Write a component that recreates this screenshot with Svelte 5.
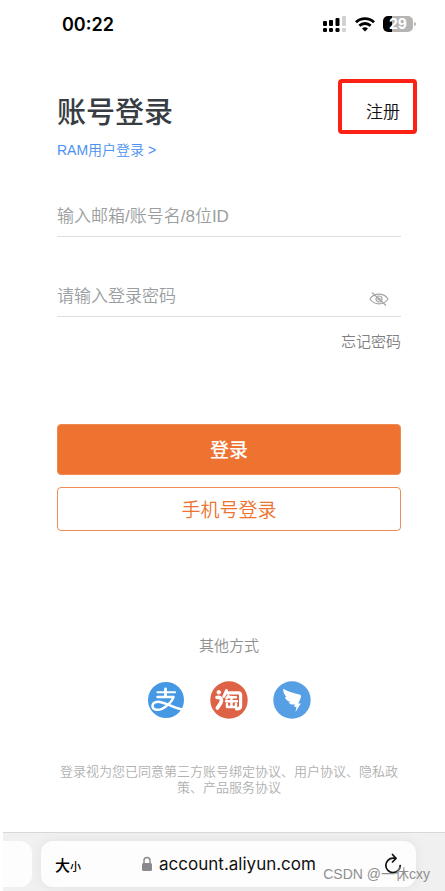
<script>
	let account = $state('');
	let password = $state('');
	let visible = $state(false);
</script>

<div class="screen">
	<header class="status">
		<time>00:22</time>
		<div class="status-icons">
			<svg width="24" height="17" viewBox="0 0 24 17" aria-label="信号">
				<rect x="0" y="5" width="4" height="5" rx="1" />
				<rect x="6" y="4" width="4" height="6" rx="1" />
				<rect x="12.5" y="2" width="4" height="8" rx="1" />
				<rect x="19" y="0" width="4" height="10" rx="1" fill="#d2d2d2" />
				<rect x="0" y="12" width="4" height="4" rx="1.2" />
				<rect x="6" y="12" width="4" height="4" rx="1.2" />
				<rect x="12.5" y="12" width="4" height="4" rx="1.2" />
				<rect x="19" y="12" width="4" height="4" rx="1.2" fill="#d2d2d2" />
			</svg>
			<svg width="20" height="15" viewBox="0 0 20 15" fill="none" stroke="#000" stroke-width="2.8" aria-label="无线网络">
				<path d="M1 5.2a13 13 0 0 1 18 0" />
				<path d="M4.4 8.8a8 8 0 0 1 11.2 0" />
				<path d="M10 14.6l-3-3a4.4 4.4 0 0 1 6 0z" fill="#000" stroke="none" />
			</svg>
			<div class="battery"><span>29</span></div>
		</div>
	</header>

	<main>
		<div class="heading">
			<div>
				<h1>账号登录</h1>
				<a class="ram" href="#ram">RAM用户登录 &gt;</a>
			</div>
			<a class="register" href="#register">注册</a>
		</div>

		<form onsubmit={(e) => e.preventDefault()}>
			<div class="field">
				<input type="text" aria-label="账号" placeholder="输入邮箱/账号名/8位ID" bind:value={account} />
			</div>
			<div class="field">
				<input
					type={visible ? 'text' : 'password'}
					aria-label="密码"
					placeholder="请输入登录密码"
					bind:value={password}
				/>
				<button type="button" class="eye" aria-label="显示密码" onclick={() => (visible = !visible)}>
					<svg width="20" height="16" viewBox="0 0 20 16" fill="none" stroke="#a6a6a6" stroke-width="1.2">
						<path d="M1 8c2-3.2 5.2-4.8 9-4.8S17 4.8 19 8c-2 3.2-5.2 4.8-9 4.8S3 11.2 1 8z" />
						<circle cx="10" cy="8" r="3" />
						<circle cx="10" cy="8" r="1" />
						<path d="M3 1.5l14 13" />
					</svg>
				</button>
			</div>
			<a class="forgot" href="#forgot">忘记密码</a>
			<button type="submit" class="btn primary">登录</button>
			<button type="button" class="btn outline">手机号登录</button>
		</form>

		<section class="others">
			<h2>其他方式</h2>
			<div class="socials">
				<a href="#alipay" aria-label="支付宝">
					<svg width="38" height="38" viewBox="0 0 38 38">
						<circle cx="19" cy="19" r="18" fill="#4599e4" />
						<g fill="none" stroke="#fff" stroke-linecap="round" stroke-linejoin="round">
							<path d="M18.5 8V15.5" stroke-width="2.8" />
							<path d="M10.5 11.2H28" stroke-width="2.1" />
							<path d="M10.5 16H26.5C25 20.5 20 25.5 15 27.8C10 29.8 5.5 28.5 5.5 25C5.5 21.5 9.5 20.2 14 21.2C20 22.5 26 26.5 35 28.5" stroke-width="2.5" />
						</g>
					</svg>
				</a>
				<a href="#taobao" aria-label="淘宝">
					<svg width="38" height="38" viewBox="0 0 38 38">
						<circle cx="19" cy="19" r="18.7" fill="#de6246" />
						<g fill="none" stroke="#fff" stroke-linecap="round" stroke-linejoin="round">
							<circle cx="8.8" cy="11.3" r="1.8" fill="#fff" stroke-width="1" />
							<path d="M7 16.5C9.5 16 11.8 17 11.5 19.5C11.3 22 9 24.5 7.3 27" stroke-width="3.6" />
							<path d="M16.5 9.5L13.8 15.5" stroke-width="3" />
							<path d="M16 11.8H28.5Q30.6 11.8 30.6 14V25Q30.6 28 26.5 28" stroke-width="3.2" />
							<path d="M18.5 14.5L16.5 17.5M18 16.2H26M16 20.3H27M21.5 16V26M17 23V26H26V23" stroke-width="2.4" />
						</g>
					</svg>
				</a>
				<a href="#dingtalk" aria-label="钉钉">
					<svg width="38" height="38" viewBox="0 0 38 38">
						<circle cx="19" cy="19" r="18.7" fill="#579fe5" />
						<path
							d="M10.2 7.8C15 10.5 21 12.5 26.5 13.6C28 14 28.3 15 27.9 16.2C27.3 18.5 26.2 20.6 25.2 22.5H27.8L22.5 31L23.5 25.8H21L22 23.4C19.5 24 17.5 23.3 15.5 21.4L17.5 21C14.5 20.2 12.6 18.5 11.9 15.9L13.5 16C11 13.5 10 11 10.2 7.8Z"
							fill="#fff"
						/>
					</svg>
				</a>
			</div>
			<p>登录视为您已同意第三方账号绑定协议、用户协议、隐私政策、产品服务协议</p>
		</section>
	</main>

	<footer class="toolbar">
		<div class="prev-tab"></div>
		<div class="address">
			<button type="button" class="text-size" aria-label="大小">大<small>小</small></button>
			<div class="url">
				<svg width="12" height="16" viewBox="0 0 12 16" aria-hidden="true">
					<path d="M3 8V4.5a3 3 0 0 1 6 0V8" fill="none" stroke="#8a8a8e" stroke-width="1.5" />
					<rect x="1" y="7" width="10" height="8" rx="1.5" fill="#8a8a8e" />
				</svg>
				<span>account.aliyun.com</span>
			</div>
			<button type="button" class="reload" aria-label="重新加载">
				<svg width="18" height="22" viewBox="0 0 18 22" fill="none" stroke="#111" stroke-width="1.7" stroke-linecap="round" stroke-linejoin="round">
					<path d="M11.5 5.2H9A7.2 7.2 0 1 0 16.2 12.5" />
					<path d="M8.5 1.5L12 5.3L8.5 9" />
				</svg>
			</button>
		</div>
		<span class="watermark">CSDN @一休cxy</span>
	</footer>
</div>

<style>
	:global(body) {
		margin: 0;
		background: #fff;
	}

	.screen {
		display: flex;
		flex-direction: column;
		min-height: 100vh;
		padding-left: 3px;
		box-sizing: border-box;
		overflow: hidden;
		font-family: Inter, 'Noto Sans CJK SC', sans-serif;
		color: #000;
	}

	.screen * {
		box-sizing: border-box;
	}

	a {
		text-decoration: none;
	}

	button {
		padding: 0;
		border: none;
		background: none;
		font-family: inherit;
		cursor: pointer;
	}

	svg {
		display: block;
	}

	.status {
		display: flex;
		align-items: center;
		justify-content: space-between;
		height: 48px;
		padding: 0 32px 0 59px;
	}

	time {
		font-size: 18px;
		font-weight: 600;
	}

	.status-icons {
		display: flex;
		align-items: center;
		gap: 8px;
	}

	.battery {
		position: relative;
		width: 30px;
		height: 16px;
		border-radius: 5px;
		background: linear-gradient(to right, #000 30%, #b5b5b5 30%);
		color: #fff;
		font-size: 14px;
		font-weight: 700;
		line-height: 16px;
		text-align: center;
	}

	.battery::after {
		content: '';
		position: absolute;
		top: 6px;
		right: -3px;
		width: 2px;
		height: 4px;
		border-radius: 0 2px 2px 0;
		background: #b5b5b5;
	}

	main {
		padding: 31px 44px 36px 54px;
		font-family: 'Liberation Sans', 'Noto Sans CJK SC', sans-serif;
	}

	.heading {
		display: flex;
		align-items: flex-start;
		justify-content: space-between;
	}

	h1 {
		margin: 14px 0 5px;
		font-size: 29px;
		font-weight: 500;
		line-height: 40px;
		color: #373d41;
	}

	.ram {
		display: block;
		font-size: 14px;
		font-weight: 350;
		line-height: 24px;
		color: #4a90f0;
	}

	.register {
		width: 79px;
		height: 55px;
		margin-right: -16px;
		padding-left: 24px;
		border: 4px solid #fd2015;
		border-radius: 4px;
		font-size: 17px;
		font-weight: 350;
		line-height: 60px;
		color: #111;
	}

	form {
		display: flex;
		flex-direction: column;
		padding-top: 31px;
	}

	.field {
		display: flex;
		align-items: center;
		height: 44px;
		margin-bottom: 36px;
		border-bottom: 1px solid #dedede;
	}

	.field + .field {
		margin-bottom: 13px;
	}

	input {
		flex: 1;
		min-width: 0;
		padding: 4px 0 0;
		border: none;
		outline: none;
		background: none;
		font-family: inherit;
		font-size: 17px;
		font-weight: 350;
		color: #373d41;
	}

	input::placeholder {
		color: #9b9ea0;
		opacity: 1;
	}

	.eye {
		margin: 8px 12px 0 0;
	}

	.forgot {
		align-self: flex-end;
		font-size: 15px;
		font-weight: 350;
		line-height: 24px;
		color: #808080;
	}

	.btn {
		width: 100%;
		padding-bottom: 2px;
		border-radius: 4px;
		font-size: 19px;
	}

	.primary {
		height: 51px;
		margin-top: 70px;
		border: 1px solid #f08a52;
		background: #ee7330;
		font-weight: 500;
		color: #fff;
	}

	.outline {
		height: 44px;
		margin-top: 12px;
		border: 1px solid #ee8d58;
		font-weight: 350;
		color: #ec7430;
	}

	.others {
		display: flex;
		flex-direction: column;
		align-items: center;
		padding-top: 103px;
	}

	h2 {
		margin: 0;
		font-size: 15px;
		font-weight: 350;
		line-height: 24px;
		color: #909090;
	}

	.socials {
		display: flex;
		gap: 25px;
		margin: 23px 0 45px;
	}

	p {
		margin: 0;
		font-size: 13px;
		font-weight: 350;
		line-height: 16px;
		text-align: center;
		color: #b0b0b0;
	}

	.toolbar {
		position: relative;
		display: flex;
		gap: 9px;
		margin-top: auto;
		padding: 8px 29px 4px 0;
		border-top: 1px solid #d8d8d8;
		background: #f0f0f0;
	}

	.prev-tab {
		width: 29px;
		height: 46px;
		border-radius: 0 12px 12px 0;
		background: #fdfdfd;
	}

	.address {
		display: flex;
		flex: 1;
		align-items: center;
		justify-content: space-between;
		height: 46px;
		padding: 0 14px;
		border-radius: 12px;
		background: #fdfdfd;
		box-shadow: 0 0 12px rgba(0, 0, 0, 0.06);
	}

	.text-size {
		font-size: 15px;
		font-weight: 500;
		color: #000;
	}

	.text-size small {
		font-size: 11px;
	}

	.url {
		display: flex;
		align-items: center;
		gap: 6px;
		font-size: 17px;
		color: #111;
	}

	.reload {
		display: flex;
		justify-content: flex-end;
		width: 26px;
	}

	.watermark {
		position: absolute;
		right: 15px;
		bottom: 7px;
		font-family: 'Liberation Sans', 'Noto Sans CJK SC', sans-serif;
		font-size: 14px;
		line-height: 20px;
		color: #8f8f8f;
		pointer-events: none;
	}
</style>
